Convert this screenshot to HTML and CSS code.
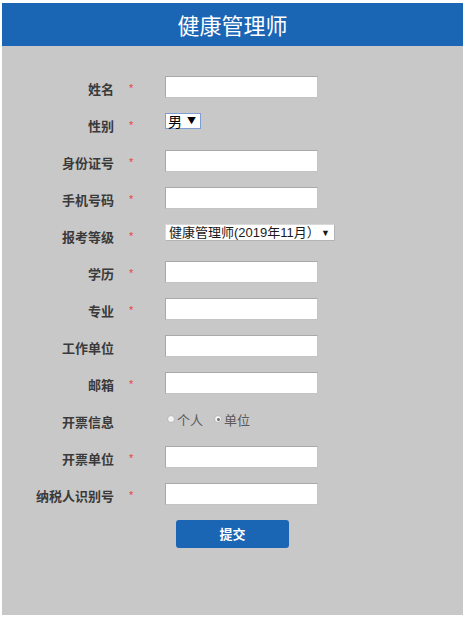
FILE: index.html
```html
<!DOCTYPE html>
<html lang="zh-CN">
<head>
<meta charset="utf-8">
<title>健康管理师</title>
<link rel="stylesheet" href="styles.css">
</head>
<body>
<div class="page">
  <header class="top">健康管理师</header>
  <main class="form">
    <div class="row"><span class="label">姓名</span><span class="star">*</span><span class="input"></span></div>
    <div class="row"><span class="label">性别</span><span class="star">*</span><span class="field"><span class="select sex"><span class="opt">男</span><span class="arrow">▼</span></span></span></div>
    <div class="row"><span class="label">身份证号</span><span class="star">*</span><span class="input"></span></div>
    <div class="row"><span class="label">手机号码</span><span class="star">*</span><span class="input"></span></div>
    <div class="row"><span class="label">报考等级</span><span class="star">*</span><span class="field"><span class="select level"><span class="opt">健康管理师(2019年11月）</span><span class="arrow">▼</span></span></span></div>
    <div class="row"><span class="label">学历</span><span class="star">*</span><span class="input"></span></div>
    <div class="row"><span class="label">专业</span><span class="star">*</span><span class="input"></span></div>
    <div class="row"><span class="label">工作单位</span><span class="star"></span><span class="input"></span></div>
    <div class="row"><span class="label">邮箱</span><span class="star">*</span><span class="input"></span></div>
    <div class="row"><span class="label">开票信息</span><span class="star"></span><span class="radios"><span class="radio"></span><span class="rtext">个人</span><span class="radio on"></span><span class="rtext">单位</span></span></div>
    <div class="row"><span class="label">开票单位</span><span class="star">*</span><span class="input"></span></div>
    <div class="row"><span class="label">纳税人识别号</span><span class="star">*</span><span class="input"></span></div>
    <div class="actions"><span class="btn">提交</span></div>
  </main>
</div>
</body>
</html>
```

FILE: styles.css
```css
html, body {
  background: #ffffff;
}
body {
  margin: 3px 3px 0 2px;
  font-family: "Liberation Sans", "Noto Sans CJK SC", sans-serif;
}
.page {
  height: 612px;
  display: flex;
  flex-direction: column;
  background: #c9c8c9;
}
.top {
  height: 43px;
  line-height: 43px;
  background: #1b65b5;
  color: #ffffff;
  text-align: center;
  font-family: "Noto Sans CJK SC", sans-serif;
  font-size: 22px;
  font-weight: normal;
}
.form {
  flex: 1;
  padding-top: 30px;
}
.row {
  display: grid;
  grid-template-columns: 112px 51px 1fr;
  height: 37px;
  align-items: start;
}
.label {
  text-align: right;
  font-family: "Noto Sans CJK SC", sans-serif;
  font-size: 13px;
  font-weight: bold;
  color: #3a3a3a;
  line-height: 26px;
}
.star {
  color: #e8413f;
  font-size: 11px;
  line-height: 25px;
  padding-left: 15px;
}
.input {
  display: block;
  width: 153px;
  height: 22px;
  box-sizing: border-box;
  background: #ffffff;
  border: 1px solid #a9a9a9;
  border-right-color: #c4c4c4;
  border-bottom-color: #c4c4c4;
}
.field {
  display: flex;
}
.select {
  display: flex;
  align-items: center;
  box-sizing: border-box;
  background: #ffffff;
  color: #000000;
  height: 16px;
}
.sex {
  width: 36px;
  border: 1px solid #7d9fd6;
  font-size: 14px;
  padding-left: 2px;
  font-family: "Noto Sans CJK SC", sans-serif;
}
.sex .opt {
  line-height: 14px;
}
.arrow {
  font-size: 9px;
  margin-left: auto;
  margin-right: 4px;
  line-height: 14px;
}
.level {
  width: 170px;
  height: 17px;
  border: 1px solid #b4b4b4;
  border-top-color: #d8d8d8;
  border-left-color: #d8d8d8;
  font-size: 13px;
  padding-left: 3px;
  color: #1a1a1a;
}
.level .opt {
  line-height: 15px;
  font-family: "Liberation Sans", "Noto Sans CJK SC", sans-serif;
}
.radios {
  display: flex;
  align-items: center;
  height: 20px;
  padding-left: 2px;
  font-family: "Noto Sans CJK SC", sans-serif;
  font-size: 13px;
  color: #5a5a5a;
}
.radio {
  width: 8px;
  height: 8px;
  box-sizing: border-box;
  border: 1px solid #b8b8b8;
  border-radius: 50%;
  background: #f4f4f4;
  display: flex;
  align-items: center;
  justify-content: center;
}
.radio.on::after {
  content: "";
  width: 3px;
  height: 3px;
  border-radius: 50%;
  background: #707070;
}
.rtext {
  margin-left: 2px;
  margin-right: 11px;
}
.actions {
  padding-left: 174px;
}
.btn {
  display: block;
  width: 113px;
  height: 28px;
  line-height: 28px;
  background: #1b65b5;
  border-radius: 3px;
  color: #ffffff;
  text-align: center;
  font-family: "Noto Sans CJK SC", sans-serif;
  font-size: 13px;
  font-weight: bold;
}
```
